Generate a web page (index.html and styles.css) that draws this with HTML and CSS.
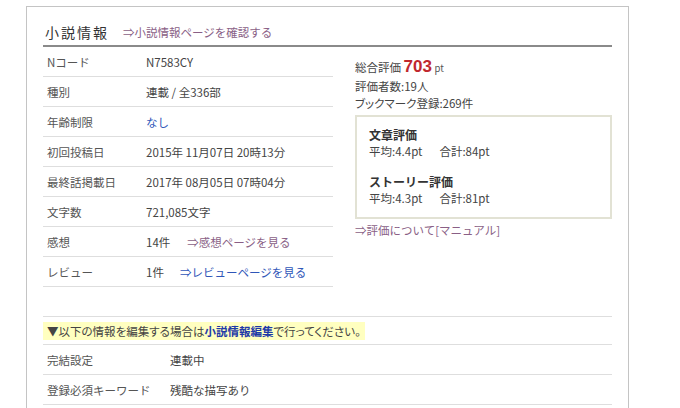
FILE: index.html
```html
<!DOCTYPE html>
<html lang="ja">
<head>
<meta charset="utf-8">
<link rel="stylesheet" href="styles.css">
</head>
<body>
<div class="box">
  <div class="head">
    <span class="title">小説情報</span>
    <a class="link-p head-link" href="#">⇒小説情報ページを確認する</a>
  </div>
  <div class="cols">
    <div class="table">
      <div class="row"><div class="lab">Nコード</div><div class="val">N7583CY</div></div>
      <div class="row"><div class="lab">種別</div><div class="val">連載 / 全336部</div></div>
      <div class="row"><div class="lab">年齢制限</div><div class="val"><a class="link-b" href="#">なし</a></div></div>
      <div class="row"><div class="lab">初回投稿日</div><div class="val">2015年 11月07日 20時13分</div></div>
      <div class="row"><div class="lab">最終話掲載日</div><div class="val">2017年 08月05日 07時04分</div></div>
      <div class="row"><div class="lab">文字数</div><div class="val">721,085文字</div></div>
      <div class="row"><div class="lab">感想</div><div class="val">14件<a class="link-p gap1" href="#">⇒感想ページを見る</a></div></div>
      <div class="row"><div class="lab">レビュー</div><div class="val">1件<a class="link-b gap2" href="#">⇒レビューページを見る</a></div></div>
    </div>
    <div class="side">
      <div class="total">総合評価 <span class="pts">703</span> <span class="pt">pt</span></div>
      <div class="line">評価者数:19人</div>
      <div class="line">ブックマーク登録:269件</div>
      <div class="rate">
        <div class="rate-t">文章評価</div>
        <div class="rate-v">平均:4.4pt<span class="sum">合計:84pt</span></div>
        <div class="rate-t second">ストーリー評価</div>
        <div class="rate-v">平均:4.3pt<span class="sum">合計:81pt</span></div>
      </div>
      <a class="link-p manual" href="#">⇒評価について[マニュアル]</a>
    </div>
  </div>
  <div class="lower">
    <div class="notice-row"><span class="notice">▼以下の情報を編集する場合は<a class="edit" href="#">小説情報編集</a>で行ってください。</span></div>
    <div class="row2"><div class="lab2">完結設定</div><div class="val">連載中</div></div>
    <div class="row2"><div class="lab2">登録必須キーワード</div><div class="val">残酷な描写あり</div></div>
  </div>
</div>
</body>
</html>
```

FILE: styles.css
```css
html, body {
  margin: 0;
  padding: 0;
  background: #ffffff;
}
body {
  font-family: "Noto Sans CJK JP", "DejaVu Sans", sans-serif;
  font-size: 11.5px;
  color: #444;
}
a { text-decoration: none; }
.box {
  margin: 6px 0 0 26px;
  width: 569px;
  height: 420px;
  padding: 0 16px;
  border: 1px solid #c4c4c4;
  border-bottom: none;
}
.head {
  display: flex;
  align-items: center;
  height: 18px;
  padding: 16px 0 4px 2px;
  border-bottom: 2px solid #8a8a8a;
}
.title {
  font-size: 14px;
  letter-spacing: 2px;
  color: #333;
  font-weight: 400;
}
.head-link { margin-left: 14px; font-size: 11.5px; }
.link-p { color: #8a5f86; }
.link-b { color: #2f56b8; }
.cols {
  display: flex;
  gap: 22px;
}
.table { width: 290px; }
.row {
  display: flex;
  align-items: center;
  height: 29px;
  border-bottom: 1px solid #dedede;
}
.lab {
  width: 99px;
  padding-left: 4px;
  color: #555;
}
.val { color: #444; }
.gap1 { margin-left: 17px; }
.gap2 { margin-left: 16px; }
.side {
  width: 257px;
  padding-top: 10px;
  display: flex;
  flex-direction: column;
  align-items: flex-start;
}
.total { line-height: 20px; color: #444; }
.pts {
  font-family: "Liberation Sans", Arial, sans-serif;
  font-weight: bold;
  font-size: 17px;
  color: #c0282e;
}
.pt { font-size: 9.5px; color: #555; }
.line { line-height: 17px; font-feature-settings: "palt"; }
.rate {
  margin-top: 3px;
  align-self: stretch;
  border: 2px solid #e2e2d4;
  padding: 9px 12px 10px;
}
.rate-t {
  font-weight: bold;
  font-size: 12px;
  color: #333;
  line-height: 17px;
}
.rate-t.second { margin-top: 13px; }
.rate-v { line-height: 17px; color: #444; }
.sum { margin-left: 17px; }
.manual { margin-top: 2px; line-height: 18px; }
.lower { margin-top: 29px; border-top: 1px solid #dedede; }
.notice-row {
  height: 27px;
  display: flex;
  align-items: center;
  border-bottom: 1px solid #dedede;
}
.notice {
  background: #ffffc0;
  padding: 1px 4px;
  line-height: 16px;
  color: #444;
  font-feature-settings: "palt";
}
.edit { color: #1e3aa8; font-weight: bold; }
.row2 {
  display: flex;
  align-items: center;
  height: 29px;
  border-bottom: 1px solid #dedede;
}
.lab2 {
  width: 123px;
  padding-left: 4px;
  color: #555;
}
```
